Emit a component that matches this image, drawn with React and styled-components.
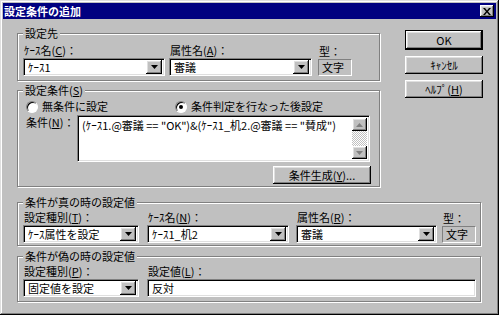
import React from 'react';
import styled, { createGlobalStyle } from 'styled-components';

const GlobalStyle = createGlobalStyle`
  html, body {
    margin: 0;
    padding: 0;
    background: #ffffff;
  }
  body {
    font-family: "Noto Sans CJK JP", "Liberation Sans", sans-serif;
    font-size: 11px;
    color: #000;
  }
`;

const raised = `
  box-shadow: inset -1px -1px #000, inset 1px 1px #fff, inset -2px -2px #808080, inset 2px 2px #dfdfdf;
`;

const Window = styled.div`
  width: 499px;
  height: 315px;
  box-sizing: border-box;
  padding: 3px;
  background: #c0c0c0;
  box-shadow: inset -1px -1px #000, inset 1px 1px #dfdfdf, inset -2px -2px #808080, inset 2px 2px #fff;
  display: flex;
  flex-direction: column;
`;

const TitleBar = styled.div`
  height: 16px;
  background: #000080;
  color: #fff;
  display: flex;
  align-items: center;
  justify-content: space-between;
  padding: 0 2px 0 1px;
  font-weight: bold;
  line-height: 16px;
`;

const CloseButton = styled.div`
  width: 14px;
  height: 12px;
  box-sizing: border-box;
  background: #c0c0c0;
  display: flex;
  align-items: center;
  justify-content: center;
  ${raised}
`;

const Content = styled.div`
  padding: 8px 13px 0 14px;
  display: flex;
  flex-direction: column;
`;

const TopRow = styled.div`
  display: flex;
  align-items: flex-start;
`;

const LeftColumn = styled.div`
  width: 363px;
  display: flex;
  flex-direction: column;
  gap: 3px;
`;

const ButtonColumn = styled.div`
  margin-left: 25px;
  margin-top: 3px;
  display: flex;
  flex-direction: column;
  gap: 6px;
`;

const PushButton = styled.button`
  width: ${p => p.$w || 78}px;
  height: ${p => (p.$default ? 20 : 18)}px;
  box-sizing: border-box;
  padding: 0;
  margin: 0;
  font: inherit;
  line-height: 14px;
  color: #000;
  background: #c0c0c0;
  border: ${p => (p.$default ? '1px solid #000' : 'none')};
  ${raised}
  display: flex;
  align-items: center;
  justify-content: center;
`;

const Group = styled.fieldset`
  margin: ${p => p.$m || '0'};
  min-width: 0;
  padding: ${p => p.$pad};
  border: 1px solid #808080;
  box-shadow: 1px 1px 0 #fff, inset 1px 1px 0 #fff;
`;

const Legend = styled.legend`
  padding: 0 2px;
  line-height: 12px;
  background: #c0c0c0;
`;

const FieldRow = styled.div`
  display: flex;
  align-items: flex-end;
`;

const Field = styled.div`
  display: flex;
  flex-direction: column;
  margin-left: ${p => p.$ml || 0}px;
`;

const Label = styled.div`
  line-height: 12px;
  padding-left: 1px;
  margin-bottom: ${p => p.$mb ?? 2}px;
  white-space: nowrap;
`;

const Sunken = styled.div`
  box-sizing: border-box;
  background: #fff;
  border: 1px solid;
  border-color: #808080 #fff #fff #808080;
  box-shadow: inset 1px 1px #000, inset -1px -1px #dfdfdf;
`;

const ComboFrame = styled(Sunken)`
  width: ${p => p.$w}px;
  height: 18px;
  padding: 2px;
  display: flex;
  align-items: center;
`;

const ComboValue = styled.div`
  flex: 1;
  padding-left: 2px;
  line-height: 14px;
  white-space: nowrap;
`;

const DropButton = styled.div`
  width: 16px;
  height: 14px;
  box-sizing: border-box;
  background: #c0c0c0;
  display: flex;
  align-items: center;
  justify-content: center;
  ${raised}
`;

const TextInput = styled(Sunken)`
  width: ${p => p.$w}px;
  height: 18px;
  padding: 1px 4px;
  line-height: 14px;
`;

const TypeBox = styled.div`
  width: 34px;
  height: 17px;
  box-sizing: border-box;
  border: 1px solid;
  border-color: #808080 #fff #fff #808080;
  padding-left: 3px;
  line-height: 15px;
`;

const RadioRow = styled.div`
  display: flex;
  align-items: center;
  padding-left: 3px;
  height: 13px;
`;

const Radio = styled.label`
  display: flex;
  align-items: center;
  gap: 4px;
  margin-left: ${p => p.$ml || 0}px;
  line-height: 13px;
`;

const RadioCircle = styled.span`
  width: 12px;
  height: 12px;
  box-sizing: border-box;
  border-radius: 50%;
  background: #fff;
  border: 1px solid;
  border-color: #808080 #fff #fff #808080;
  box-shadow: inset 1px 1px #000;
  display: flex;
  align-items: center;
  justify-content: center;
  &::after {
    content: '';
    width: 4px;
    height: 4px;
    border-radius: 50%;
    background: ${p => (p.$checked ? '#000' : 'transparent')};
  }
`;

const ConditionRow = styled.div`
  display: flex;
  align-items: flex-start;
  margin-top: 2px;
  padding-left: 3px;
`;

const ConditionLabel = styled.div`
  width: 51px;
  line-height: 13px;
  margin-top: 1px;
`;

const TextArea = styled(Sunken)`
  width: 293px;
  height: 47px;
  padding: 2px;
  display: flex;
`;

const TextAreaText = styled.div`
  flex: 1;
  padding: 0 2px;
  line-height: 14px;
  white-space: nowrap;
`;

const ScrollBar = styled.div`
  width: 15px;
  display: flex;
  flex-direction: column;
`;

const ScrollArrow = styled.div`
  height: 13px;
  box-sizing: border-box;
  background: #c0c0c0;
  display: flex;
  align-items: center;
  justify-content: center;
  ${raised}
`;

const ScrollTrack = styled.div`
  flex: 1;
  background-image: repeating-conic-gradient(#c0c0c0 0 25%, #fff 0 50%);
  background-size: 2px 2px;
`;

const ButtonRow = styled.div`
  display: flex;
  justify-content: flex-end;
  margin-top: 4px;
`;

const Arrow = ({ up, color = '#000' }) => (
  <svg width="7" height="4" viewBox="0 0 7 4">
    <polygon points={up ? '3.5,0 7,4 0,4' : '0,0 7,0 3.5,4'} fill={color} />
  </svg>
);

const Combo = ({ w, value }) => (
  <ComboFrame $w={w}>
    <ComboValue>{value}</ComboValue>
    <DropButton>
      <Arrow />
    </DropButton>
  </ComboFrame>
);

export default function App() {
  return (
    <>
      <GlobalStyle />
      <Window>
        <TitleBar>
          <span>設定条件の追加</span>
          <CloseButton>
            <svg width="8" height="7" viewBox="0 0 8 7">
              <path d="M0 0h2l2 2.5L6 0h2L5 3.5 8 7H6L4 4.5 2 7H0l3-3.5z" fill="#000" />
            </svg>
          </CloseButton>
        </TitleBar>

        <Content>
          <TopRow>
            <LeftColumn>
              <Group $pad="5px 5px 4px 5px">
                <Legend>設定先</Legend>
                <FieldRow>
                  <Field>
                    <Label>ｹｰｽ名(<u>C</u>)：</Label>
                    <Combo w={142} value="ｹｰｽ1" />
                  </Field>
                  <Field $ml={4}>
                    <Label>属性名(<u>A</u>)：</Label>
                    <Combo w={143} value="審議" />
                  </Field>
                  <Field $ml={6}>
                    <Label>型：</Label>
                    <TypeBox>文字</TypeBox>
                  </Field>
                </FieldRow>
              </Group>

              <Group $pad="4px 8px 2px 5px">
                <Legend>設定条件(<u>S</u>)</Legend>
                <RadioRow>
                  <Radio>
                    <RadioCircle />
                    無条件に設定
                  </Radio>
                  <Radio $ml={67}>
                    <RadioCircle $checked />
                    条件判定を行なった後設定
                  </Radio>
                </RadioRow>
                <ConditionRow>
                  <ConditionLabel>条件(<u>N</u>)：</ConditionLabel>
                  <TextArea>
                    <TextAreaText>
                      (ｹｰｽ1.@審議 == "OK")&amp;(ｹｰｽ1_机2.@審議 == "賛成")
                    </TextAreaText>
                    <ScrollBar>
                      <ScrollArrow>
                        <Arrow up color="#808080" />
                      </ScrollArrow>
                      <ScrollTrack />
                      <ScrollArrow>
                        <Arrow color="#808080" />
                      </ScrollArrow>
                    </ScrollBar>
                  </TextArea>
                </ConditionRow>
                <ButtonRow>
                  <PushButton $w={98}>条件生成(<u>Y</u>)...</PushButton>
                </ButtonRow>
              </Group>
            </LeftColumn>

            <ButtonColumn>
              <PushButton $default>OK</PushButton>
              <PushButton>ｷｬﾝｾﾙ</PushButton>
              <PushButton>ﾍﾙﾌﾟ(<u>H</u>)</PushButton>
            </ButtonColumn>
          </TopRow>

          <Group $m="9px 2px 0 0" $pad="3px 5px 2px 5px">
            <Legend>条件が真の時の設定値</Legend>
            <FieldRow>
              <Field>
                <Label>設定種別(<u>T</u>)：</Label>
                <Combo w={116} value="ｹｰｽ属性を設定" />
              </Field>
              <Field $ml={8}>
                <Label>ｹｰｽ名(<u>N</u>)：</Label>
                <Combo w={142} value="ｹｰｽ1_机2" />
              </Field>
              <Field $ml={7}>
                <Label>属性名(<u>R</u>)：</Label>
                <Combo w={141} value="審議" />
              </Field>
              <Field $ml={5}>
                <Label>型：</Label>
                <TypeBox>文字</TypeBox>
              </Field>
            </FieldRow>
          </Group>

          <Group $m="4px 2px 0 0" $pad="3px 5px 4px 5px">
            <Legend>条件が偽の時の設定値</Legend>
            <FieldRow>
              <Field>
                <Label>設定種別(<u>P</u>)：</Label>
                <Combo w={116} value="固定値を設定" />
              </Field>
              <Field $ml={8}>
                <Label>設定値(<u>L</u>)：</Label>
                <TextInput $w={329}>反対</TextInput>
              </Field>
            </FieldRow>
          </Group>
        </Content>
      </Window>
    </>
  );
}
